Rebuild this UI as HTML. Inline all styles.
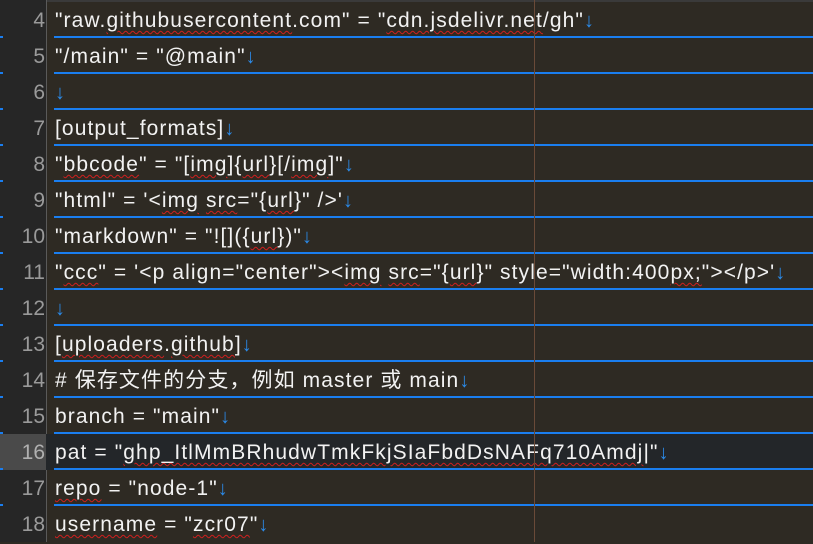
<!DOCTYPE html>
<html><head><meta charset="utf-8"><style>
body{margin:0;width:813px;height:542px;overflow:hidden;background:#2e2a23;font-family:"Liberation Sans","Noto Sans CJK SC",sans-serif;}
#g{position:absolute;left:0;top:0;width:46px;height:542px;background:#262626;border-right:1px solid #5a5a5a;}
#top{position:absolute;left:47px;top:0;width:766px;height:2px;background:#3a3a3a}
.row{position:absolute;left:0;width:813px;height:36px;}
.n{position:absolute;left:0;width:46px;height:36px;text-align:right;color:#9a9a9a;font-size:21px;line-height:38px;box-sizing:border-box;padding-right:1px}
.t{position:absolute;left:55px;height:35px;line-height:38px;color:#f2f2f2;font-size:21px;letter-spacing:1.1px;white-space:pre;}
.b{position:absolute;left:54px;right:0;bottom:0;height:2px;background:#1a7ef0}
.bt{position:absolute;left:0;width:3px;bottom:0;height:2px;background:#1a7ef0}
.a{color:#2b8ae8;font-size:20px;letter-spacing:0}
.w{text-decoration:underline wavy #d02020;text-decoration-thickness:1px;text-underline-offset:3px}
#guide{position:absolute;left:534px;top:0;width:1px;height:542px;background:#6a4a38}
.act .n{background:#4a4a4a;color:#b0b0b0}
.act{background:#232629}
</style></head><body>
<div id="g"></div><div id="top"></div>
<div class="row" style="top:2px"><div class="n">4</div><div class="t">"raw.<span class="w">githubusercontent</span>.com" = "<span class="w">cdn.jsdelivr.net</span>/gh"<span class="a">↓</span></div><div class="b"></div><div class="bt"></div></div>
<div class="row" style="top:38px"><div class="n">5</div><div class="t">"/main" = "@main"<span class="a">↓</span></div><div class="b"></div><div class="bt"></div></div>
<div class="row" style="top:74px"><div class="n">6</div><div class="t"><span class="a">↓</span></div><div class="b"></div><div class="bt"></div></div>
<div class="row" style="top:110px"><div class="n">7</div><div class="t">[output_formats]<span class="a">↓</span></div><div class="b"></div><div class="bt"></div></div>
<div class="row" style="top:146px"><div class="n">8</div><div class="t">"<span class="w">bbcode</span>" = "[<span class="w">img</span>]{<span class="w">url</span>}[/<span class="w">img</span>]"<span class="a">↓</span></div><div class="b"></div><div class="bt"></div></div>
<div class="row" style="top:182px"><div class="n">9</div><div class="t">"html" = '&lt;<span class="w">img</span> <span class="w">src</span>="{<span class="w">url</span>}" /&gt;'<span class="a">↓</span></div><div class="b"></div><div class="bt"></div></div>
<div class="row" style="top:218px"><div class="n">10</div><div class="t">"markdown" = "![]({<span class="w">url</span>})"<span class="a">↓</span></div><div class="b"></div><div class="bt"></div></div>
<div class="row" style="top:254px"><div class="n">11</div><div class="t">"<span class="w">ccc</span>" = '&lt;p align="center"&gt;&lt;<span class="w">img</span> <span class="w">src</span>="{<span class="w">url</span>}" style="width:400<span class="w">px;</span>"&gt;&lt;/p&gt;'<span class="a">↓</span></div><div class="b"></div><div class="bt"></div></div>
<div class="row" style="top:290px"><div class="n">12</div><div class="t"><span class="a">↓</span></div><div class="b"></div><div class="bt"></div></div>
<div class="row" style="top:326px"><div class="n">13</div><div class="t">[<span class="w">uploaders</span>.<span class="w">github</span>]<span class="a">↓</span></div><div class="b"></div><div class="bt"></div></div>
<div class="row" style="top:362px"><div class="n">14</div><div class="t"># 保存文件的分支，例如 master 或 main<span class="a">↓</span></div><div class="b"></div><div class="bt"></div></div>
<div class="row" style="top:398px"><div class="n">15</div><div class="t">branch = "main"<span class="a">↓</span></div><div class="b"></div><div class="bt"></div></div>
<div class="row act" style="top:434px"><div class="n">16</div><div class="t">pat = "<span class="w">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</span>|"<span class="a">↓</span></div><div class="b"></div><div class="bt"></div></div>
<div class="row" style="top:470px"><div class="n">17</div><div class="t"><span class="w">repo</span> = "node-1"<span class="a">↓</span></div><div class="b"></div><div class="bt"></div></div>
<div class="row" style="top:506px"><div class="n">18</div><div class="t"><span class="w">username</span> = "<span class="w">zcr07</span>"<span class="a">↓</span></div></div>
<div id="guide"></div>
</body></html>
